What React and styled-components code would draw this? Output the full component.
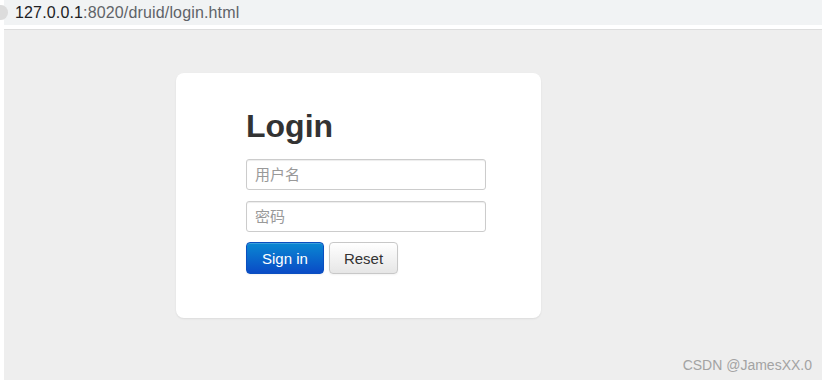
import React, { useState } from 'react';
import styled, { createGlobalStyle } from 'styled-components';

const GlobalStyle = createGlobalStyle`
    html, body {
        margin: 0;
        padding: 0;
        background: #ffffff;
        font-family: 'Liberation Sans', Arial, 'Noto Sans CJK SC', sans-serif;
    }
`;

const Frame = styled.div`
    width: 827px;
    height: 380px;
    padding: 0 5px 0 4px;
    box-sizing: border-box;
    display: flex;
    flex-direction: column;
    overflow: hidden;
`;

const AddressBar = styled.div`
    height: 25px;
    flex: none;
    background: #f1f3f4;
    display: flex;
    align-items: center;
    position: relative;
    padding-left: 11px;
    font-size: 16px;
    color: #5f6368;
    letter-spacing: 0.15px;
`;

const SiteIcon = styled.span`
    position: absolute;
    left: -10px;
    top: 5px;
    width: 14px;
    height: 15px;
    border-radius: 50%;
    background: #dcdcdc;
`;

const Host = styled.span`
    color: #202124;
`;

const Spacer = styled.div`
    height: 4px;
    flex: none;
    background: #ffffff;
    border-bottom: 1px solid #dddddd;
`;

const Page = styled.main`
    flex: 1;
    background: #eeeeee;
    position: relative;
    padding: 43px 0 0 172px;
`;

const Card = styled.form`
    width: 365px;
    height: 245px;
    box-sizing: border-box;
    padding: 33px 55px 0 70px;
    background: #ffffff;
    border-radius: 8px;
    box-shadow: 0 1px 2px rgba(0, 0, 0, 0.08);
    display: flex;
    flex-direction: column;
`;

const Title = styled.h2`
    margin: 0 0 13px;
    font-size: 32px;
    line-height: 40px;
    font-weight: bold;
    color: #333333;
`;

const Input = styled.input`
    width: 240px;
    height: 31px;
    box-sizing: border-box;
    margin: 0 0 11px;
    padding: 0 8px;
    border: 1px solid #cccccc;
    border-radius: 3px;
    box-shadow: inset 0 1px 1px rgba(0, 0, 0, 0.075);
    font-family: 'Liberation Sans', Arial, 'Noto Sans CJK SC', sans-serif;
    font-size: 15px;
    color: #555555;
    outline: none;

    &::placeholder {
        color: #999999;
    }

    &:last-of-type {
        margin-bottom: 10px;
    }
`;

const Actions = styled.div`
    display: flex;
    gap: 5px;
`;

const Button = styled.button`
    height: 32px;
    box-sizing: border-box;
    padding: 0 ${props => props.primary ? '15px' : '14px'};
    border-radius: 4px;
    font-family: 'Liberation Sans', Arial, sans-serif;
    font-size: 15px;
    cursor: pointer;
    color: ${props => props.primary ? '#ffffff' : '#333333'};
    border: 1px solid ${props => props.primary ? '#0a4fc0' : '#c8c8c8'};
    background: ${props => props.primary
        ? 'linear-gradient(to bottom, #0a88d2, #0a4bc6)'
        : 'linear-gradient(to bottom, #ffffff, #e6e6e6)'};
    box-shadow: inset 0 1px 0 rgba(255, 255, 255, 0.2), 0 1px 2px rgba(0, 0, 0, 0.05);
`;

const Watermark = styled.span`
    position: absolute;
    right: 10px;
    bottom: 7px;
    font-size: 14px;
    color: #a3a3a3;
`;

const App = () => {
    const [user, setUser] = useState('');
    const [pass, setPass] = useState('');

    const onReset = () => {
        setUser('');
        setPass('');
    };

    return (
        <Frame>
            <GlobalStyle />
            <AddressBar>
                <SiteIcon />
                <Host>127.0.0.1</Host>:8020/druid/login.html
            </AddressBar>
            <Spacer />
            <Page>
                <Card onSubmit={(e) => e.preventDefault()}>
                    <Title>Login</Title>
                    <Input
                        type="text"
                        placeholder="用户名"
                        value={user}
                        onChange={(e) => setUser(e.target.value)} />
                    <Input
                        type="password"
                        placeholder="密码"
                        value={pass}
                        onChange={(e) => setPass(e.target.value)} />
                    <Actions>
                        <Button primary type="submit">Sign in</Button>
                        <Button type="button" onClick={onReset}>Reset</Button>
                    </Actions>
                </Card>
                <Watermark>CSDN @JamesXX.0</Watermark>
            </Page>
        </Frame>
    );
};

export default App;
